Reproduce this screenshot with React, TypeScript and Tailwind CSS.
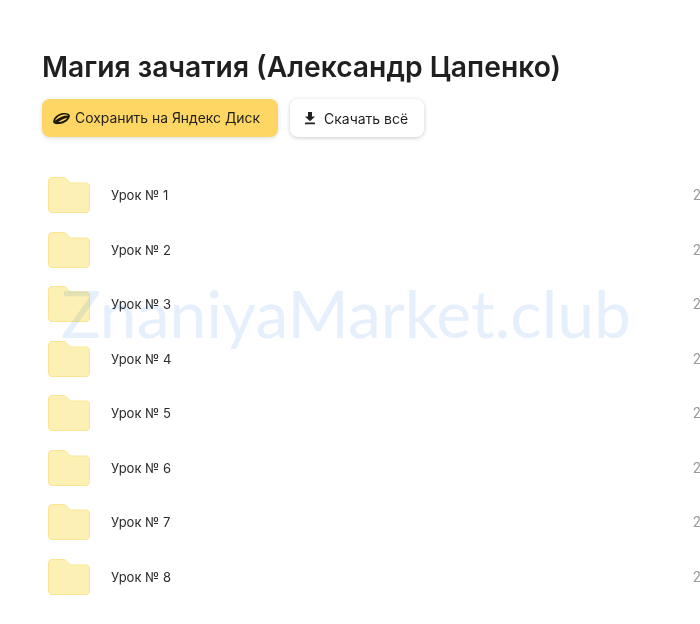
const lessons = ["Урок № 1", "Урок № 2", "Урок № 3", "Урок № 4", "Урок № 5", "Урок № 6", "Урок № 7", "Урок № 8"];

function FolderIcon() {
  return (
    <svg width="44" height="38" viewBox="0 0 44 38" className="shrink-0">
      <path
        d="M1.500 5C1.500 3 3 1.500 5 1.500H16c1.600 0 2.600.5 3.700 1.700l2 2.200c1 1 2 1.600 3.500 1.600H39c2 0 3.500 1.500 3.500 3.500V33c0 2-1.500 3.500-3.500 3.500H5C3 36.500 1.500 35 1.500 33z"
        fill="#fdf0b4"
        stroke="#fbe594"
        strokeWidth="1"
      />
    </svg>
  );
}

function DiskIcon() {
  return (
    <svg width="19" height="13" viewBox="0 0 20 14" className="shrink-0">
      <path
        d="M1 10.500C1 6 6 1.500 12 1c4-.3 7 .8 7 3 0 4-5.500 8.500-11.500 9C3.500 13.300 1 12.700 1 10.500z"
        fill="#1f1a0a"
      />
      <path
        d="M3 9.500C4.500 6 8 3 12.500 2.700c2.200-.2 4 .2 4.700 1-3.500-.3-9.500 1.500-14.200 5.800z"
        fill="#fdd75f"
      />
      <path
        d="M6.500 10.800c2.500-2.200 6-4 9.800-4.700-1.800 2.600-5.800 4.700-9.800 4.700z"
        fill="#fdd75f"
      />
    </svg>
  );
}

function DownloadIcon() {
  return (
    <svg width="14" height="14" viewBox="0 0 14 14" className="shrink-0">
      <path d="M5 1h4v4.500h3L7 10.200 2 5.500h3z" fill="#222" />
      <rect x="2" y="11.500" width="10" height="1.800" rx="0.500" fill="#222" />
    </svg>
  );
}

export default function App() {
  return (
    <div className="relative h-[624px] w-[700px] overflow-hidden bg-white font-['Inter','Noto_Sans',sans-serif] text-[#1f1f1f]">
      <div className="pl-[42px] pt-[50px]">
        <h1 className="whitespace-nowrap text-[28.25px] font-semibold leading-[34px]">
          Магия зачатия (Александр Цапенко)
        </h1>
        <div className="mt-[15px] flex gap-[12px]">
          <button
            type="button"
            className="flex h-[38px] w-[236px] items-center gap-[4px] rounded-[8px] bg-[#fdd663] pl-[10px] text-[13.9px] shadow-[0_1px_4px_rgba(0,0,0,0.15)]"
          >
            <DiskIcon />
            Сохранить на Яндекс Диск
          </button>
          <button
            type="button"
            className="flex h-[38px] w-[134px] items-center gap-[7px] rounded-[8px] bg-white pl-[13px] text-[14px] shadow-[0_1px_4px_rgba(0,0,0,0.2)]"
          >
            <DownloadIcon />
            Скачать всё
          </button>
        </div>
        <div className="mt-[31px] ml-[5px] flex w-[713px] flex-col">
          {lessons.map((name) => (
            <div key={name} className="flex h-[54.5px] items-center">
              <FolderIcon />
              <span className="ml-[20px] flex-1 pt-px text-[13px] text-[#2b2b2b]">{name}</span>
              <span className="w-[67px] whitespace-nowrap pt-px font-['Roboto',sans-serif] text-[14px] text-[#999]">24.04.2021</span>
            </div>
          ))}
        </div>
      </div>
      <div className="absolute left-[61px] top-[273px] whitespace-nowrap font-['Lato',sans-serif] text-[66px] leading-[80px] text-[#e6f0fd] mix-blend-multiply">
        ZnaniyaMarket.club
      </div>
    </div>
  );
}
